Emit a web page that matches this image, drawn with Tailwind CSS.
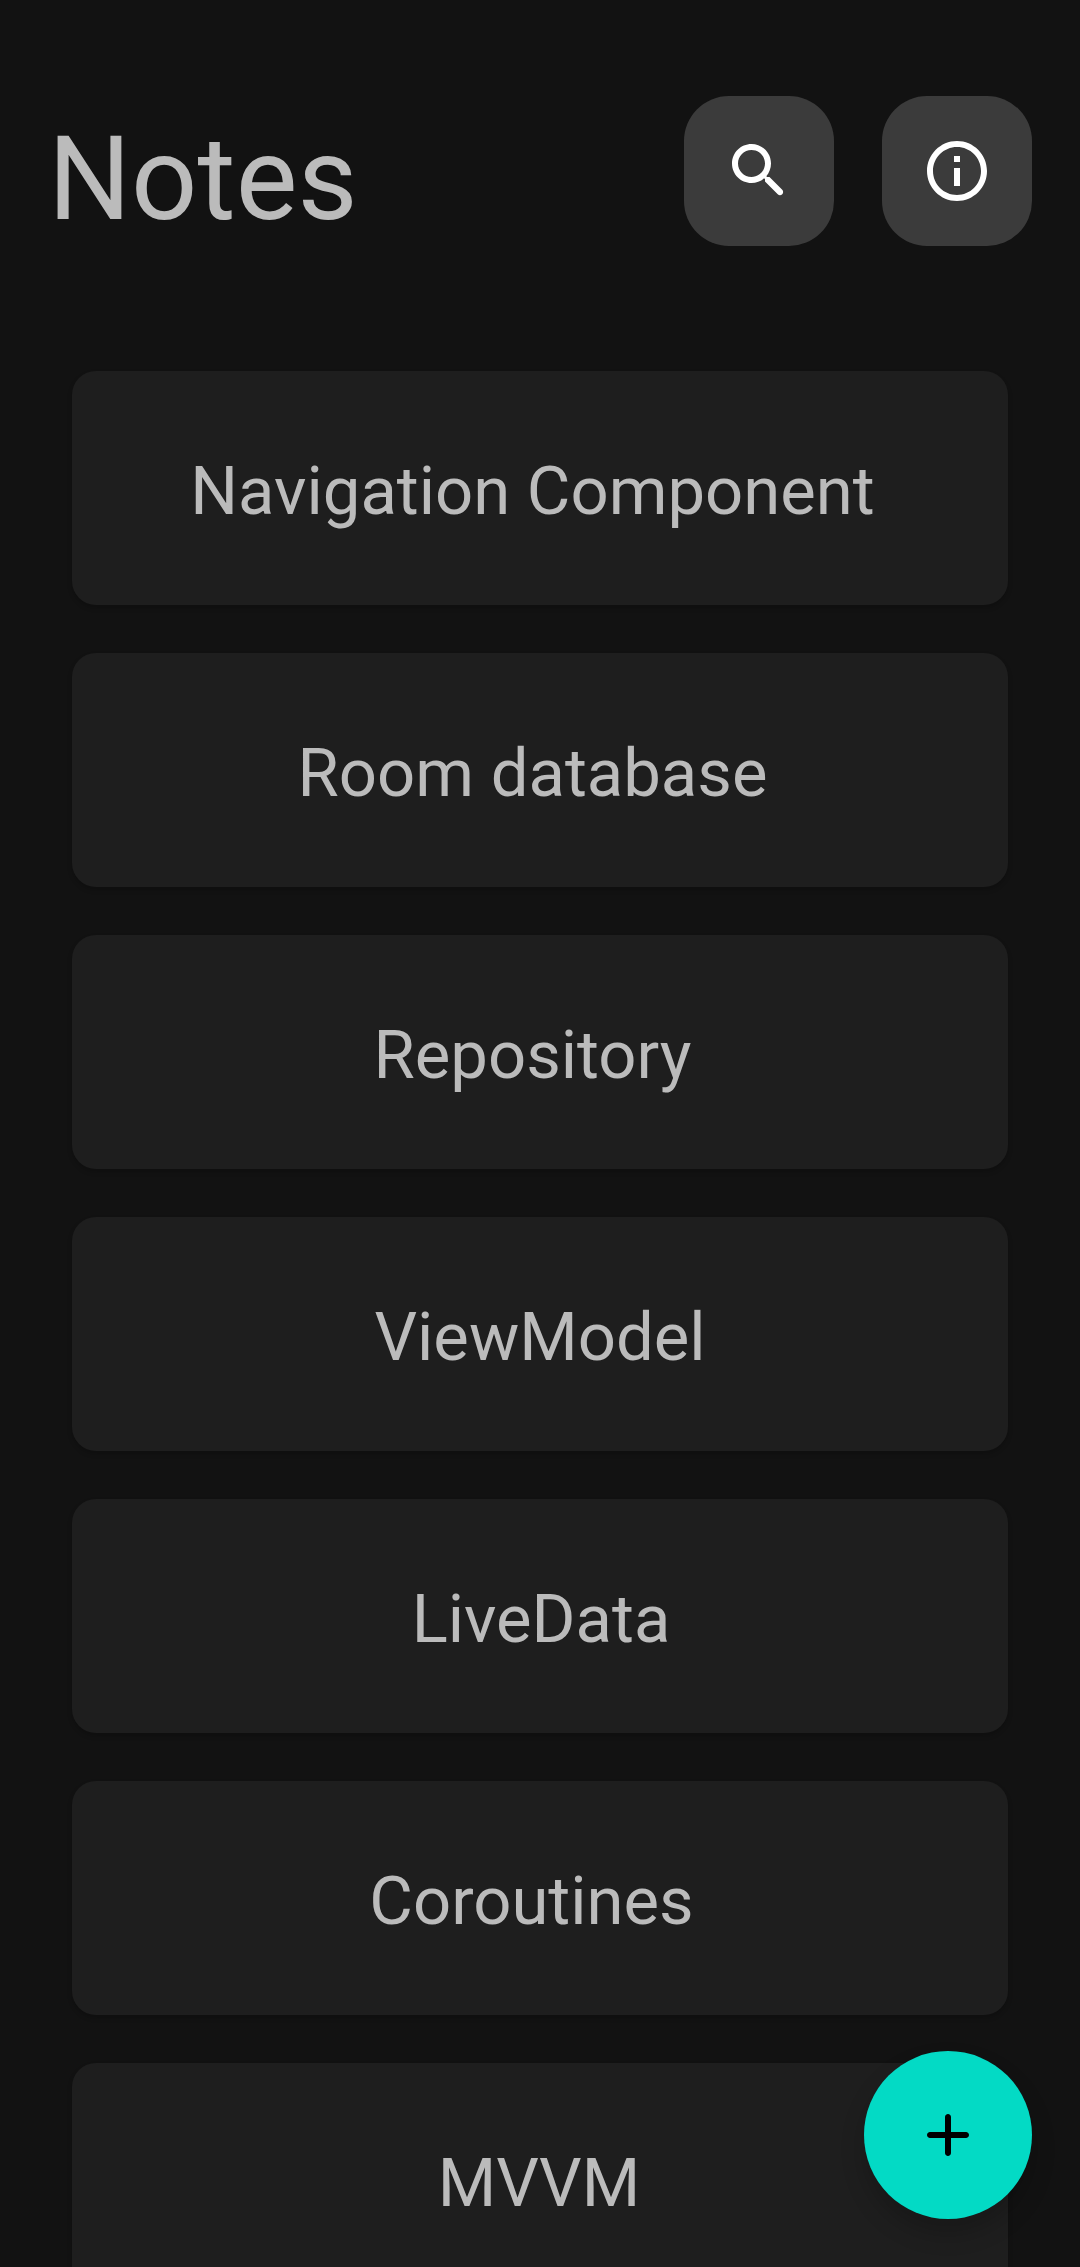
<!DOCTYPE html>
<html lang="en">
<head>
<meta charset="utf-8">
<title>Notes</title>
<script src="https://cdn.jsdelivr.net/npm/@tailwindcss/browser@4"></script>
</head>
<body class="bg-[#121212]">
<div class="relative h-[2267px] w-[1080px] overflow-hidden bg-[#121212] font-['Roboto',sans-serif] text-[#bbbbbb]">
<header class="flex h-[275px] items-start justify-between px-12 pt-24">
<h1 class="pt-[14px] text-[116.5px] leading-[138px]">Notes</h1>
<div class="flex gap-12">
<button class="flex size-[150px] items-center justify-center rounded-[45px] bg-[#3b3b3b]" aria-label="Search"><svg class="size-[72px]" viewBox="0 0 24 24" fill="#fff"><path d="M15.5 14h-.79l-.28-.27C15.41 12.59 16 11.11 16 9.5 16 5.91 13.09 3 9.5 3S3 5.91 3 9.5 5.91 16 9.5 16c1.61 0 3.09-.59 4.23-1.57l.27.28v.79l4.25 4.25c.41.41 1.08.41 1.49 0 .41-.41.41-1.08 0-1.49L15.5 14zm-6 0C7.01 14 5 11.99 5 9.5S7.01 5 9.5 5 14 7.01 14 9.5 11.99 14 9.5 14z"/></svg></button>
<button class="flex size-[150px] items-center justify-center rounded-[45px] bg-[#3b3b3b]" aria-label="Info"><svg class="size-[72px]" viewBox="0 0 24 24" fill="#fff"><path d="M11 7h2v2h-2zm0 4h2v6h-2zm1-9C6.48 2 2 6.48 2 12s4.48 10 10 10 10-4.48 10-10S17.52 2 12 2zm0 18c-4.41 0-8-3.59-8-8s3.59-8 8-8 8 3.59 8 8-3.59 8-8 8z"/></svg></button>
</div>
</header>
<main class="mt-24 flex flex-col gap-12 px-[72px] text-[67px] leading-[78px]">
<div class="flex h-[234px] shrink-0 items-center justify-center rounded-3xl bg-[#1e1e1e] pt-1.5 pr-[15px] shadow-[0_3px_5px_rgba(0,0,0,0.2)]">Navigation Component</div>
<div class="flex h-[234px] shrink-0 items-center justify-center rounded-3xl bg-[#1e1e1e] pt-1.5 pr-[15px] shadow-[0_3px_5px_rgba(0,0,0,0.2)]">Room database</div>
<div class="flex h-[234px] shrink-0 items-center justify-center rounded-3xl bg-[#1e1e1e] pt-1.5 pr-[15px] shadow-[0_3px_5px_rgba(0,0,0,0.2)]">Repository</div>
<div class="flex h-[234px] shrink-0 items-center justify-center rounded-3xl bg-[#1e1e1e] pt-1.5 shadow-[0_3px_5px_rgba(0,0,0,0.2)]">ViewModel</div>
<div class="flex h-[234px] shrink-0 items-center justify-center rounded-3xl bg-[#1e1e1e] pt-1.5 pl-0.5 shadow-[0_3px_5px_rgba(0,0,0,0.2)]">LiveData</div>
<div class="flex h-[234px] shrink-0 items-center justify-center rounded-3xl bg-[#1e1e1e] pt-1.5 pr-[17px] shadow-[0_3px_5px_rgba(0,0,0,0.2)]">Coroutines</div>
<div class="flex h-[234px] shrink-0 items-center justify-center rounded-3xl bg-[#1e1e1e] pt-1.5 pr-0.5 shadow-[0_3px_5px_rgba(0,0,0,0.2)]">MVVM</div>
</main>
<button class="absolute right-12 bottom-12 flex size-[168px] items-center justify-center rounded-full bg-[#03dac5] shadow-[0_14px_24px_rgba(0,0,0,0.2)]" aria-label="Add note"><svg class="size-[72px]" viewBox="0 0 24 24" fill="#000"><path d="M18 13h-5v5c0 .55-.45 1-1 1s-1-.45-1-1v-5H6c-.55 0-1-.45-1-1s.45-1 1-1h5V6c0-.55.45-1 1-1s1 .45 1 1v5h5c.55 0 1 .45 1 1s-.45 1-1 1z"/></svg></button>
</div>
</body>
</html>
